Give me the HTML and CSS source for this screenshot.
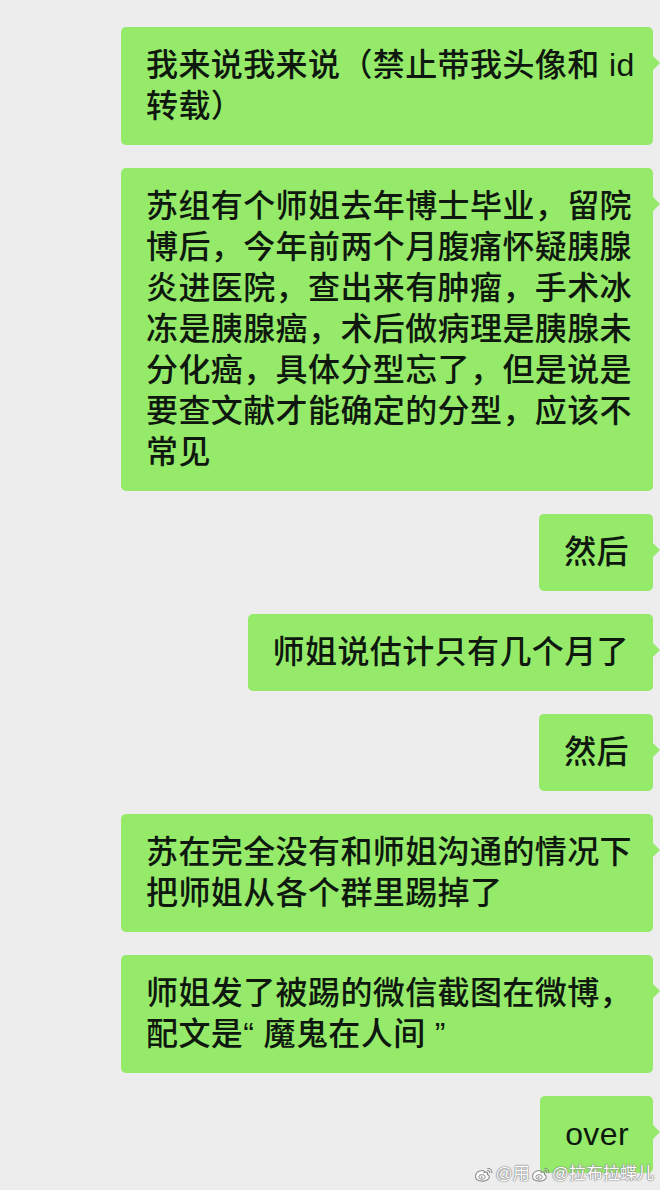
FILE: index.html
```html
<!DOCTYPE html>
<html lang="zh-CN">
<head>
    <meta charset="UTF-8">
    <meta name="viewport" content="width=device-width, initial-scale=1.0">
    <title>聊天记录</title>
    <link rel="stylesheet" href="styles.css">
</head>
<body>
    <div class="chat">
        <div class="msg msg-full">我来说我来说（禁止带我头像和 id<br>转载）</div>
        <div class="msg msg-full">苏组有个师姐去年博士毕业，留院<br>博后，今年前两个月腹痛怀疑胰腺<br>炎进医院，查出来有肿瘤，手术冰<br>冻是胰腺癌，术后做病理是胰腺未<br>分化癌，具体分型忘了，但是说是<br>要查文献才能确定的分型，应该不<br>常见</div>
        <div class="msg">然后</div>
        <div class="msg">师姐说估计只有几个月了</div>
        <div class="msg">然后</div>
        <div class="msg msg-full">苏在完全没有和师姐沟通的情况下<br>把师姐从各个群里踢掉了</div>
        <div class="msg msg-full">师姐发了被踢的微信截图在微博，<br>配文是“ 魔鬼在人间 ”</div>
        <div class="msg">over</div>
    </div>

    <div class="watermark">
        <span class="wm-item">
            <svg class="wb-logo" viewBox="0 0 22 18" width="20" height="16">
                <path d="M9 5C5 5 1.5 8 1.5 11.5S5 17 9.5 17 17 14.5 17 12c0-1.6-1.3-2.2-2.3-2.5.6-1.4.4-2.6-1.5-2.6-1 0-2 .5-2 .5.4-1.4-.3-2.4-2.2-2.4Z" fill="#fff" stroke="#8a8a8a" stroke-width="1.2"/>
                <ellipse cx="8.8" cy="12.3" rx="3.6" ry="2.6" fill="none" stroke="#8a8a8a" stroke-width="1.1"/>
                <circle cx="8.4" cy="12.5" r="1" fill="#8a8a8a"/>
                <path d="M15 2.5a5 5 0 0 1 5 5M15 5a2.4 2.4 0 0 1 2.6 2.6" fill="none" stroke="#8a8a8a" stroke-width="1.2" stroke-linecap="round"/>
            </svg>@用
        </span>
        <span class="wm-item">
            <svg class="wb-logo" viewBox="0 0 22 18" width="20" height="16">
                <path d="M9 5C5 5 1.5 8 1.5 11.5S5 17 9.5 17 17 14.5 17 12c0-1.6-1.3-2.2-2.3-2.5.6-1.4.4-2.6-1.5-2.6-1 0-2 .5-2 .5.4-1.4-.3-2.4-2.2-2.4Z" fill="#fff" stroke="#8a8a8a" stroke-width="1.2"/>
                <ellipse cx="8.8" cy="12.3" rx="3.6" ry="2.6" fill="none" stroke="#8a8a8a" stroke-width="1.1"/>
                <circle cx="8.4" cy="12.5" r="1" fill="#8a8a8a"/>
                <path d="M15 2.5a5 5 0 0 1 5 5M15 5a2.4 2.4 0 0 1 2.6 2.6" fill="none" stroke="#8a8a8a" stroke-width="1.2" stroke-linecap="round"/>
            </svg>@拉布拉蝶儿
        </span>
    </div>
</body>
</html>
```

FILE: styles.css
```css
body {
    margin: 0;
    padding: 0;
    background: #ededed;
    font-family: "Liberation Sans", "Noto Sans CJK SC", sans-serif;
    color: #0e180e;
    height: 1190px;
    overflow: hidden;
    position: relative;
}

.chat {
    display: flex;
    flex-direction: column;
    align-items: flex-end;
    gap: 23px;
    padding: 27px 7px 0 0;
}

.msg {
    position: relative;
    box-sizing: border-box;
    max-width: 532px;
    padding: 18px 24px 18px 25px;
    background: #95ea6a;
    border-radius: 5px;
    font-size: 32px;
    font-weight: 500;
    line-height: 41px;
    letter-spacing: 0.4px;
    white-space: nowrap;
}

.msg-full {
    width: 532px;
}

/* little tail pointing at the avatar */
.msg::after {
    content: "";
    position: absolute;
    top: 29px;
    right: -7px;
    border-top: 7px solid transparent;
    border-bottom: 7px solid transparent;
    border-left: 7px solid #95ea6a;
}

.watermark {
    position: absolute;
    right: 6px;
    bottom: 6px;
    display: flex;
    align-items: center;
    gap: 1px;
    font-size: 17px;
    line-height: 20px;
    white-space: nowrap;
    color: #fff;
    text-shadow: 0 0 1px #777, 0 0 1px #777, 0 0 2px #999;
}

.wm-item {
    display: flex;
    align-items: center;
}

.wb-logo {
    flex: none;
    margin-right: 1px;
}
```
